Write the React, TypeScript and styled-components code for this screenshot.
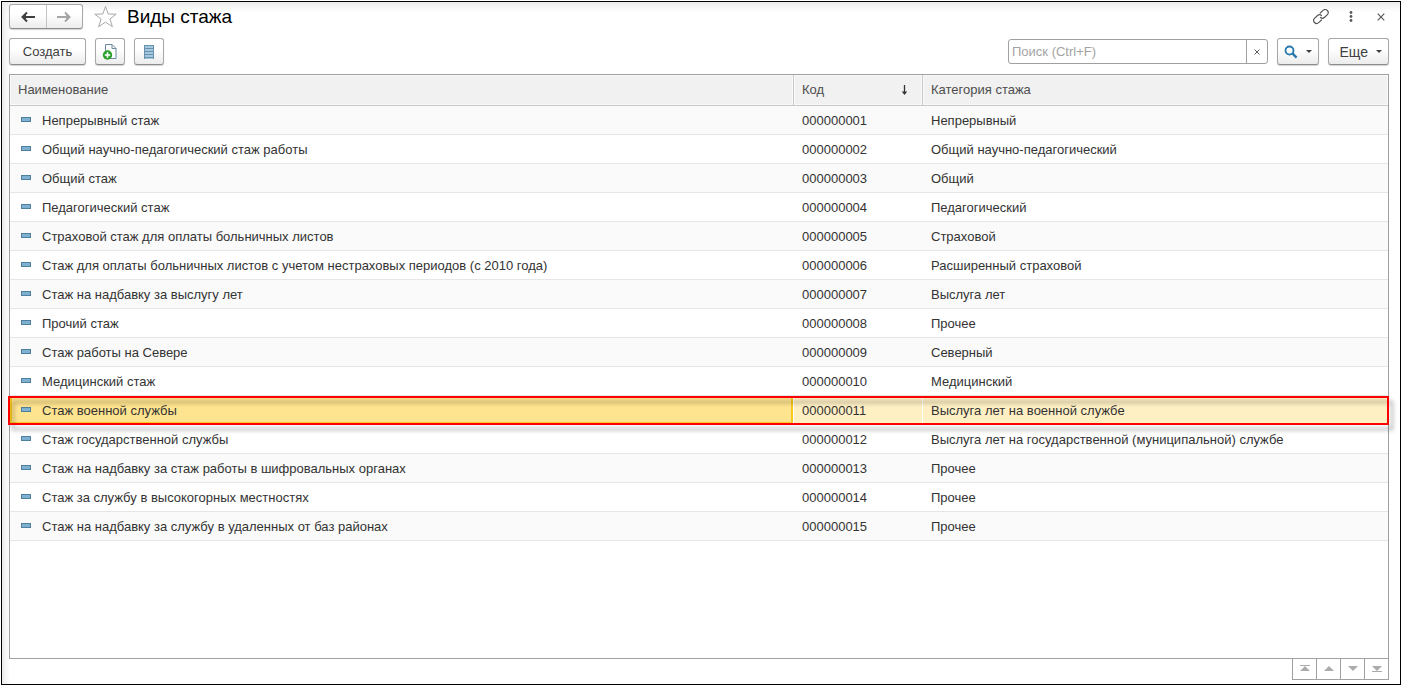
import React, { useState } from "react";
import styled, { createGlobalStyle, css } from "styled-components";

const GlobalStyle = createGlobalStyle`
  *, *::before, *::after { box-sizing: border-box; }
  body {
    margin: 0;
    background: #fff;
    color: #333;
    font: 13px/16px "Liberation Sans", Arial, sans-serif;
  }
  button, input { font: inherit; color: inherit; }
`;

const Page = styled.div`
  display: flex;
  min-height: 100vh;
  padding: 1px 0 0 1px;
`;

const Frame = styled.main`
  flex: 1;
  min-width: 0;
  display: flex;
  flex-direction: column;
  border: 1px solid #000;
  padding: 2px 11px 4px 7px;
  background:
    linear-gradient(to bottom, #ebebeb, rgba(255, 255, 255, 0) 10px),
    linear-gradient(to right, #ebebeb, rgba(255, 255, 255, 0) 8px),
    #fff;
`;

const TitleBar = styled.header`
  display: flex;
  align-items: center;
  height: 25px;
`;

const raised = css`
  border: 1px solid #a8a8a8;
  border-bottom-color: #8c8c8c;
  border-radius: 3px;
  background: linear-gradient(#fff 40%, #ececec);
  box-shadow: 0 1px 1px rgba(0, 0, 0, 0.18);
`;

const NavGroup = styled.nav`
  ${raised}
  display: flex;
  width: 74px;
  height: 25px;
`;

const NavButton = styled.button`
  flex: 1;
  display: flex;
  align-items: center;
  justify-content: center;
  padding: 0;
  border: 0;
  background: none;
  color: #404040;
  & + & {
    border-left: 1px solid #c4c4c4;
  }
  &:disabled {
    color: #a6a6a6;
  }
`;

const PlainButton = styled.button`
  display: flex;
  align-items: center;
  justify-content: center;
  width: 24px;
  height: 24px;
  padding: 0;
  border: 0;
  background: none;
  color: #595959;
`;

const Title = styled.h1`
  flex: 1;
  margin: 0 0 0 10px;
  font-size: 19px;
  line-height: 24px;
  font-weight: 400;
  color: #000;
`;

const FavoriteButton = styled(PlainButton)`
  margin-left: 10px;
`;

const WindowButtons = styled.div`
  display: flex;
  gap: 6px;
  margin-right: -4px;
`;

const Toolbar = styled.div`
  display: flex;
  align-items: center;
  gap: 9px;
  margin: 9px 0;
`;

const Button = styled.button<{ $width: number }>`
  ${raised}
  display: flex;
  align-items: center;
  justify-content: center;
  gap: 8px;
  width: ${(p) => p.$width}px;
  height: 27px;
  padding: 0;
  color: #404040;
`;

const MoreButton = styled(Button)`
  justify-content: flex-end;
  padding-right: 6px;
  font-size: 14px;
`;

const SearchBox = styled.div`
  display: flex;
  width: 260px;
  height: 25px;
  margin-left: auto;
  border: 1px solid #a0a0a0;
  border-radius: 3px;
  background: #fff;
`;

const SearchInput = styled.input`
  flex: 1;
  min-width: 0;
  padding: 0 3px;
  border: 0;
  outline: 0;
  background: none;
  &::placeholder {
    color: #a3a3a3;
    opacity: 1;
  }
`;

const ClearButton = styled.button`
  display: flex;
  align-items: center;
  justify-content: center;
  width: 21px;
  padding: 0;
  border: 0;
  border-left: 1px solid #a0a0a0;
  background: none;
  color: #4d4d4d;
`;

const ListBox = styled.section`
  flex: 1;
  border: 1px solid #a0a0a0;
  background: #fff;
`;

const Table = styled.table`
  width: 100%;
  table-layout: fixed;
  border-collapse: separate;
  border-spacing: 0;
`;

const HeadCell = styled.th<{ $width?: number }>`
  width: ${(p) => (p.$width ? `${p.$width}px` : "auto")};
  height: 31px;
  padding: 0 8px;
  border-bottom: 1px solid #c8c8c8;
  background: #f1f1f1;
  box-shadow: inset 0 0 0 1px #fafafa;
  color: #4d4d4d;
  font-weight: 400;
  text-align: left;
  & + & {
    border-left: 1px solid #c8c8c8;
  }
`;

const HeadLabel = styled.span`
  display: flex;
  align-items: center;
  justify-content: space-between;
  padding-right: 6px;
`;

const Cell = styled.td`
  height: 29px;
  padding: 2px 8px 0;
  border-bottom: 1px solid #e6e6e6;
  white-space: nowrap;
  & + & {
    padding-left: 9px;
  }
`;

const Row = styled.tr<{ $selected: boolean }>`
  background: #fff;
  &:nth-child(odd) {
    background: #fafafa;
  }
  ${(p) =>
    p.$selected &&
    css`
      position: relative;
      z-index: 1;
      ${Cell} {
        background: #fff0c4;
        border-left: 1px solid #fff;
        padding-left: 8px;
      }
      ${Cell}:first-child {
        border-left: 0;
        background: #ffe48f;
        box-shadow: inset 0 0 0 2px #f8c81c;
      }
    `}
`;

const NameLabel = styled.span`
  display: flex;
  align-items: center;
  gap: 11px;
  padding-left: 3px;
`;

const Marker = styled.i`
  width: 10px;
  height: 5px;
  margin-bottom: 3px;
  border: 1px solid #4f7f9f;
  background: #7fb0d0;
`;

const Highlight = styled.span`
  position: absolute;
  inset: 0 -1px 0 -2px;
  border: 2px solid #f00;
  filter: drop-shadow(4px 5px 2px rgba(0, 0, 0, 0.35));
  pointer-events: none;
`;

const Pager = styled.div`
  display: flex;
  align-self: flex-end;
`;

const PagerButton = styled.button`
  display: flex;
  align-items: center;
  justify-content: center;
  width: 25px;
  height: 22px;
  margin-top: -1px;
  padding: 0;
  border: 1px solid #a0a0a0;
  background: #fff;
  color: #ababab;
  & + & {
    margin-left: -1px;
  }
`;

const Arrow = ({ back }: { back?: boolean }) => (
  <svg width="16" height="12" viewBox="0 0 16 12" fill="none" stroke="currentColor" strokeWidth="2">
    {back ? (
      <path d="M3 6h12M7 1.500 2.500 6 7 10.500M5 4v4" />
    ) : (
      <path d="M1 6h12M9 1.500 13.500 6 9 10.500M11 4v4" />
    )}
  </svg>
);

const Star = () => (
  <svg width="24" height="24" viewBox="0 0 24 24" fill="#fff" stroke="#a8a8a8">
    <path d="M12.500 1.500 15.200 9 23.200 9.200 16.900 14 19.400 21.700 12.500 17.200 5.600 21.700 8.100 14 1.800 9.200 9.800 9Z" />
  </svg>
);

const LinkIcon = () => (
  <svg width="16" height="16" viewBox="0 0 16 16" fill="none" stroke="currentColor" strokeWidth="1.200" strokeLinecap="round">
    <path d="M7.300 4 9.800 1.600C11.200.3 13.100.3 14.300 1.500S15.500 4.500 14.200 5.800L11.600 8.300C10.300 9.500 8.700 9.500 7.500 8.500" />
    <path d="M8.500 11 5.900 13.400C4.500 14.700 2.700 14.700 1.500 13.500S.4 10.500 1.700 9.200L4.300 6.700C5.600 5.500 7.300 5.500 8.400 6.500" />
  </svg>
);

const Dots = () => (
  <svg width="4" height="12" viewBox="0 0 4 12" fill="currentColor">
    <circle cx="2" cy="1.500" r="1.400" />
    <circle cx="2" cy="5.500" r="1.400" />
    <circle cx="2" cy="9.500" r="1.400" />
  </svg>
);

const Cross = ({ size }: { size: number }) => (
  <svg width={size} height={size} viewBox="0 0 8 8" fill="none" stroke="currentColor" strokeWidth="1.200">
    <path d="M.7.7l6.600 6.600M7.300.7.7 7.300" />
  </svg>
);

const CopyIcon = () => (
  <svg width="16" height="16" viewBox="0 0 16 16" fill="none">
    <path d="M3.500.5h6.500l4 4v10h-10.500z" fill="#fff" stroke="#6a89a0" />
    <path d="M10 .5v4h4" stroke="#6a89a0" />
    <circle cx="5.500" cy="11" r="4.700" fill="#2ba12b" />
    <path d="M5.500 8.300v5.400M2.800 11h5.400" stroke="#fff" strokeWidth="1.600" />
  </svg>
);

const ListIcon = () => (
  <svg width="12" height="14" viewBox="0 0 12 14">
    <rect x="1" width="10" height="14" fill="#6791ae" />
    {[1, 4, 7, 10].map((y) => (
      <rect key={y} x="2" y={y} width="8" height="2" fill="#a5c8de" />
    ))}
    <rect x="2" y="13" width="8" height="1" fill="#a5c8de" />
  </svg>
);

const Magnifier = () => (
  <svg width="14" height="14" viewBox="0 0 14 14" fill="none" stroke="#2878ad">
    <circle cx="5.500" cy="5.500" r="4" strokeWidth="1.800" />
    <path d="m8.400 8.400 4.200 4.200" strokeWidth="2.400" />
  </svg>
);

const Caret = () => (
  <svg width="6" height="3" viewBox="0 0 6 3" fill="#404040">
    <path d="M0 0h6L3 3z" />
  </svg>
);

const SortArrow = () => (
  <svg width="7" height="11" viewBox="0 0 7 11" fill="none" stroke="#333">
    <path d="M3.500 0v9" strokeWidth="1.300" />
    <path d="M.8 6.500h5.400L3.500 10z" fill="#333" stroke="none" />
  </svg>
);

type Direction = "first" | "up" | "down" | "last";

const PagerIcon = ({ kind }: { kind: Direction }) => (
  <svg width="10" height="8" viewBox="0 0 10 8" fill="currentColor">
    {kind === "first" && <path d="M0 0h10v1H0zM5 1l5 5H0z" />}
    {kind === "up" && <path d="M5 1l5 5H0z" />}
    {kind === "down" && <path d="M0 1h10L5 6z" />}
    {kind === "last" && <path d="M0 1h10L5 6zM0 6h10v1H0z" />}
  </svg>
);

const pages: { kind: Direction; label: string }[] = [
  { kind: "first", label: "В начало" },
  { kind: "up", label: "Вверх" },
  { kind: "down", label: "Вниз" },
  { kind: "last", label: "В конец" },
];

const records: [string, string][] = [
  ["Непрерывный стаж", "Непрерывный"],
  ["Общий научно-педагогический стаж работы", "Общий научно-педагогический"],
  ["Общий стаж", "Общий"],
  ["Педагогический стаж", "Педагогический"],
  ["Страховой стаж для оплаты больничных листов", "Страховой"],
  ["Стаж для оплаты больничных листов с учетом нестраховых периодов (с 2010 года)", "Расширенный страховой"],
  ["Стаж на надбавку за выслугу лет", "Выслуга лет"],
  ["Прочий стаж", "Прочее"],
  ["Стаж работы на Севере", "Северный"],
  ["Медицинский стаж", "Медицинский"],
  ["Стаж военной службы", "Выслуга лет на военной службе"],
  ["Стаж государственной службы", "Выслуга лет на государственной (муниципальной) службе"],
  ["Стаж на надбавку за стаж работы в шифровальных органах", "Прочее"],
  ["Стаж за службу в высокогорных местностях", "Прочее"],
  ["Стаж на надбавку за службу в удаленных от баз районах", "Прочее"],
];

export default function App() {
  const [selected, setSelected] = useState(10);
  const [query, setQuery] = useState("");

  return (
    <Page>
      <GlobalStyle />
      <Frame>
        <TitleBar>
          <NavGroup aria-label="История">
            <NavButton aria-label="Назад"><Arrow back /></NavButton>
            <NavButton aria-label="Вперед" disabled><Arrow /></NavButton>
          </NavGroup>
          <FavoriteButton aria-label="В избранное"><Star /></FavoriteButton>
          <Title>Виды стажа</Title>
          <WindowButtons>
            <PlainButton aria-label="Ссылка"><LinkIcon /></PlainButton>
            <PlainButton aria-label="Меню"><Dots /></PlainButton>
            <PlainButton aria-label="Закрыть"><Cross size={8} /></PlainButton>
          </WindowButtons>
        </TitleBar>

        <Toolbar>
          <Button $width={77}>Создать</Button>
          <Button $width={30} aria-label="Скопировать"><CopyIcon /></Button>
          <Button $width={30} aria-label="Список"><ListIcon /></Button>
          <SearchBox>
            <SearchInput
              aria-label="Поиск"
              placeholder="Поиск (Ctrl+F)"
              value={query}
              onChange={(e) => setQuery(e.target.value)}
            />
            <ClearButton aria-label="Очистить" onClick={() => setQuery("")}><Cross size={6} /></ClearButton>
          </SearchBox>
          <Button $width={42} aria-label="Найти"><Magnifier /><Caret /></Button>
          <MoreButton $width={61}>Еще<Caret /></MoreButton>
        </Toolbar>

        <ListBox>
          <Table>
            <thead>
              <tr>
                <HeadCell>Наименование</HeadCell>
                <HeadCell $width={129}><HeadLabel>Код<SortArrow /></HeadLabel></HeadCell>
                <HeadCell $width={466}>Категория стажа</HeadCell>
              </tr>
            </thead>
            <tbody>
              {records.map(([name, category], i) => (
                <Row key={name} $selected={i === selected} onClick={() => setSelected(i)}>
                  <Cell>
                    <NameLabel><Marker />{name}</NameLabel>
                    {i === selected && <Highlight />}
                  </Cell>
                  <Cell>{String(i + 1).padStart(9, "0")}</Cell>
                  <Cell>{category}</Cell>
                </Row>
              ))}
            </tbody>
          </Table>
        </ListBox>
        <Pager>
          {pages.map(({ kind, label }) => (
            <PagerButton key={kind} aria-label={label}><PagerIcon kind={kind} /></PagerButton>
          ))}
        </Pager>
      </Frame>
    </Page>
  );
}
